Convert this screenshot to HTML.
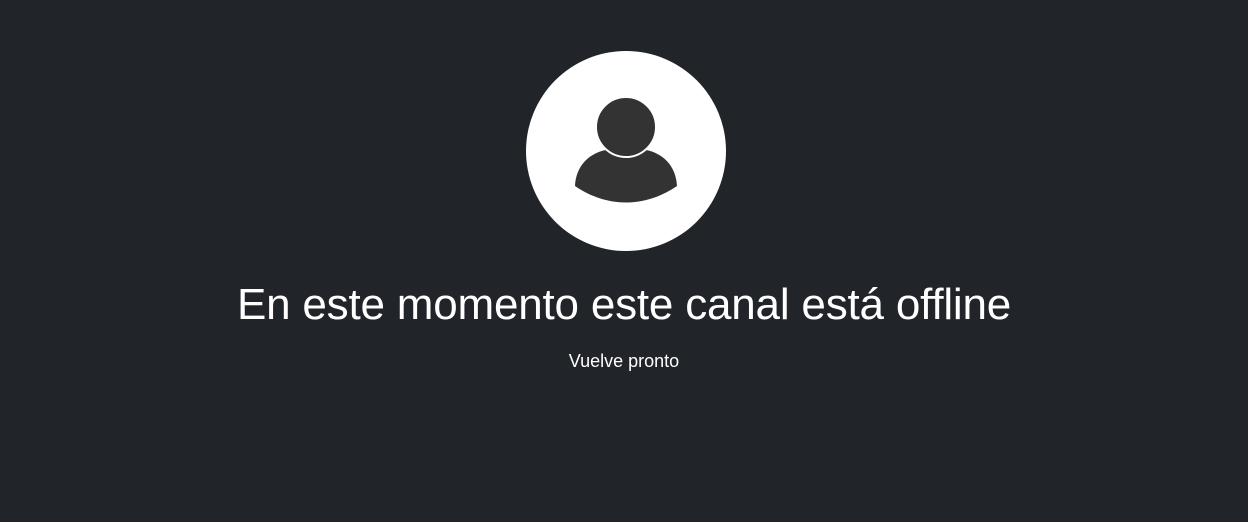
<!DOCTYPE html>
<html><head><style>
html,body{margin:0;padding:0;width:1248px;height:522px;background:#212429;overflow:hidden;font-family:"Liberation Sans",sans-serif;color:#fff}
.t{position:absolute;left:0;width:1248px;text-align:center;white-space:nowrap}
</style></head><body>
<svg style="position:absolute;left:0;top:0" width="1248" height="522">
<circle cx="626" cy="151" r="100" fill="#fff"/>
<path d="M575 186 C576 165 590 153 606 150 C616 158 636 158 646 150 C662 153 676 165 677 186 C645 208 607 208 575 186 Z" fill="#333"/>
<circle cx="626" cy="127" r="30" fill="#333" stroke="#fff" stroke-width="2"/>
</svg>
<div class="t" style="top:280px;font-size:44px;letter-spacing:-0.2px">En este momento este canal está offline</div>
<div class="t" style="top:351px;font-size:18px">Vuelve pronto</div>
</body></html>
